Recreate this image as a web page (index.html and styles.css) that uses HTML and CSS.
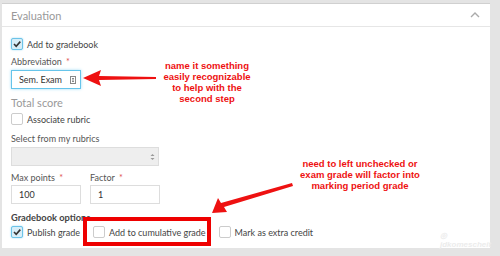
FILE: index.html
```html
<!DOCTYPE html>
<html lang="en">
<head>
    <meta charset="UTF-8">
    <title>Evaluation</title>
    <link rel="stylesheet" href="styles.css">
</head>
<body>
    <div class="panel">
        <div class="panel-head">
            <span>Evaluation</span>
            <svg class="chevron" width="10" height="6" viewBox="0 0 10 6"><path d="M1 5 L5 1 L9 5" fill="none" stroke="#aaa" stroke-width="1.4"/></svg>
        </div>
        <div class="panel-body">
            <div class="check-row first">
                <span class="box checked"><svg width="10" height="10" viewBox="0 0 10 10"><path d="M2 5 L4.2 7.3 L8.3 2.6" fill="none" stroke="#333" stroke-width="1.6"/></svg></span>
                <span>Add to gradebook</span>
            </div>
            <div class="field-label">Abbreviation <span class="req">*</span></div>
            <div class="text-input focused">
                <span>Sem. Exam</span>
                <svg class="field-icon" width="6" height="8" viewBox="0 0 6 8"><rect x="0.5" y="0.5" width="5" height="7" fill="none" stroke="#888"/><path d="M2 2.5h2M2 4h2M2 5.5h2" stroke="#888"/></svg>
            </div>
            <div class="section-title">Total score</div>
            <div class="check-row rubric">
                <span class="box"></span>
                <span>Associate rubric</span>
            </div>
            <div class="field-label spaced">Select from my rubrics</div>
            <div class="select">
                <svg width="5" height="8" viewBox="0 0 5 8"><path d="M0.5 3 L2.5 1 L4.5 3 Z M0.5 5 L2.5 7 L4.5 5 Z" fill="#999"/></svg>
            </div>
            <div class="pair">
                <div>
                    <div class="field-label">Max points <span class="req">*</span></div>
                    <div class="text-input tight">100</div>
                </div>
                <div>
                    <div class="field-label">Factor <span class="req">*</span></div>
                    <div class="text-input tight">1</div>
                </div>
            </div>
            <div class="options-title">Gradebook options</div>
            <div class="options">
                <div class="check-row">
                    <span class="box checked"><svg width="10" height="10" viewBox="0 0 10 10"><path d="M2 5 L4.2 7.3 L8.3 2.6" fill="none" stroke="#333" stroke-width="1.6"/></svg></span>
                    <span>Publish grade</span>
                </div>
                <div class="check-row">
                    <span class="box"></span>
                    <span>Add to cumulative grade</span>
                </div>
                <div class="check-row">
                    <span class="box"></span>
                    <span>Mark as extra credit</span>
                </div>
            </div>
        </div>
    </div>

    <!-- annotations drawn over the screenshot -->
    <div class="note note-one">name it something<br>easily recognizable<br>to help with the<br>second step</div>
    <div class="note note-two">need to left unchecked or<br>exam grade will factor into<br>marking period grade</div>
    <div class="red-box"></div>
    <svg class="arrows" width="500" height="256" viewBox="0 0 500 256">
        <path d="M83 78 L101 70 L99 76 L156 77 L156 79 L99 80 L101 86 Z" fill="#ee1111"/>
        <path d="M212 213 L218 198 L221 203 L292 183 L293 186 L224 207 L227 212 Z" fill="#ee1111"/>
    </svg>
    <div class="watermark">◎ jdkomescheit</div>
</body>
</html>
```

FILE: styles.css
```css
body {
    margin: 0;
    width: 500px;
    height: 256px;
    background: #e4e4e4;
    font-family: 'Lato', 'Open Sans', sans-serif;
    color: #444;
    position: relative;
    overflow: hidden;
}
.panel {
    margin: 3px 0 0 2px;
    width: 488px;
    height: 245px;
    background: white;
    border-top: 1px solid #d0d0d0;
    box-sizing: border-box;
}
.panel-head {
    height: 22px;
    padding: 0 10px 0 9px;
    display: flex;
    align-items: center;
    justify-content: space-between;
    border-bottom: 1px solid #e6e6e6;
    color: #999;
    font-size: 11px;
}
.panel-body {
    padding: 0 9px;
    font-size: 9px;
}
.check-row {
    display: flex;
    align-items: center;
    gap: 4px;
    height: 12px;
    color: #444;
    font-size: 9px;
    white-space: nowrap;
}
.check-row.first {
    margin-top: 11px;
}
.box {
    flex: none;
    width: 12px;
    height: 12px;
    box-sizing: border-box;
    border: 1px solid #ccc;
    border-radius: 2px;
    background: white;
    display: flex;
    align-items: center;
    justify-content: center;
}
.box.checked {
    border-color: #6cc3e8;
    background: #d8eef8;
    box-shadow: 0 0 2px #9ad8f2;
}
.field-label {
    margin-top: 6px;
    height: 12px;
    line-height: 12px;
    font-size: 9px;
    color: #555;
}
.field-label.spaced {
    margin-top: 8px;
}
.req {
    color: #e05050;
    margin-left: 2px;
}
.text-input {
    margin-top: 2px;
    width: 70px;
    height: 19px;
    box-sizing: border-box;
    border: 1px solid #ddd;
    padding: 0 4px 0 7px;
    display: flex;
    align-items: center;
    justify-content: space-between;
    font-size: 9px;
    color: #333;
    white-space: nowrap;
}
.text-input.focused {
    border-color: #66c4ea;
    box-shadow: 0 0 3px #a6def5;
}
.text-input.tight {
    margin-top: 1px;
}
.section-title {
    margin-top: 7px;
    height: 14px;
    line-height: 14px;
    font-size: 11px;
    color: #999;
}
.check-row.rubric {
    margin-top: 3px;
}
.select {
    margin-top: 2px;
    width: 148px;
    height: 19px;
    box-sizing: border-box;
    background: #eeeeee;
    border: 1px solid #ddd;
    display: flex;
    align-items: center;
    justify-content: flex-end;
    padding-right: 3px;
}
.pair {
    display: flex;
    gap: 9px;
}
.options-title {
    margin-top: 8px;
    height: 12px;
    line-height: 12px;
    font-size: 9.3px;
    font-weight: bold;
    color: #444;
}
.options {
    margin-top: 2px;
    display: flex;
    gap: 13px;
}
.note {
    position: absolute;
    font-family: 'Liberation Sans', Arial, sans-serif;
    font-weight: bold;
    font-size: 9.5px;
    line-height: 11px;
    color: #ee1111;
    text-align: center;
}
.note-one {
    left: 147px;
    top: 60px;
    width: 120px;
}
.note-two {
    left: 290px;
    top: 158px;
    width: 140px;
}
.red-box {
    position: absolute;
    left: 83px;
    top: 217px;
    width: 128px;
    height: 29px;
    box-sizing: border-box;
    border: 4px solid #ee0000;
}
.arrows {
    position: absolute;
    left: 0;
    top: 0;
}
.watermark {
    position: absolute;
    left: 440px;
    top: 231px;
    font-family: 'Liberation Sans', Arial, sans-serif;
    font-style: italic;
    font-weight: bold;
    font-size: 8px;
    color: #ececec;
}
```
